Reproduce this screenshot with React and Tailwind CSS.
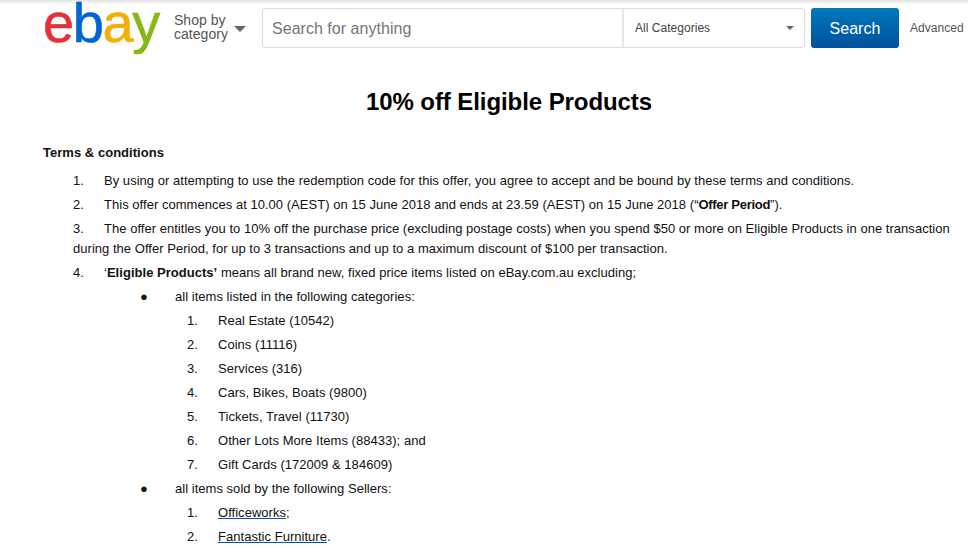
import React from 'react'

const categories = [
  'Real Estate (10542)',
  'Coins (11116)',
  'Services (316)',
  'Cars, Bikes, Boats (9800)',
  'Tickets, Travel (11730)',
  'Other Lots More Items (88433); and',
  'Gift Cards (172009 & 184609)',
]

const Caret = ({ className }) => <span className={`block border-x-transparent border-t-[#666] ${className}`} />

const Header = () => (
  <header className="flex h-[56px] items-start bg-gradient-to-b from-[#e4e4e4] to-white to-[5px] pl-[43px] pt-[8px]">
    <div className="-mt-[15px] flex h-[60px] w-[117px] items-center text-[56px] leading-none tracking-[-1.4px] font-['Liberation_Sans',sans-serif] [-webkit-text-stroke:0.6px]">
      <span className="text-[#e53238]">e</span>
      <span className="text-[#0064d2]">b</span>
      <span className="text-[#f5af02]">a</span>
      <span className="text-[#86b817]">y</span>
    </div>
    <div className="ml-[14px] mt-[5px] w-[58px] text-[14px] leading-[14px] text-[#555]">Shop by category</div>
    <Caret className="ml-[2px] mt-[18px] border-x-[6px] border-t-[6px]" />
    <div className="ml-[16px] flex h-[40px] w-[543px] rounded-[3px] border border-[#ddd]">
      <div className="flex w-[361px] items-center border-r-2 border-[#e5e5e5] pl-[9px] pt-[1px] text-[16px] text-[#757575]">Search for anything</div>
      <div className="flex flex-1 items-center justify-between pl-[11px] pr-[10px] text-[12px] text-[#444]">
        All Categories
        <Caret className="border-x-[4px] border-t-[4px]" />
      </div>
    </div>
    <button className="ml-[6px] h-[40px] w-[88px] rounded-[3px] bg-gradient-to-b from-[#0079bc] to-[#00509d] pt-[1px] text-[16px] text-white">Search</button>
    <span className="ml-[11px] mt-[11px] text-[12px] text-[#555]">Advanced</span>
  </header>
)

const Row = ({ marker, className = '', children }) => (
  <p className={`mb-[4px] leading-[20px] ${className}`}>
    <span className="inline-block w-[31px]">{marker}</span>
    {children}
  </p>
)

const App = () => (
  <div className="h-[550px] overflow-hidden bg-white font-['Liberation_Sans',Arial,sans-serif] text-[13px] tracking-[0.03px] text-[#111]">
    <Header />
    <h1 className="mt-[30px] pl-[50px] text-center text-[24px] font-bold leading-[32px] tracking-[-0.08px] text-black">10% off Eligible Products</h1>
    <div className="pl-[43px] pr-[10px] pt-[25px]">
      <h2 className="mb-[8px] font-bold leading-[20px]">Terms &amp; conditions</h2>
      <div className="pl-[30px]">
        <Row marker="1.">By using or attempting to use the redemption code for this offer, you agree to accept and be bound by these terms and conditions.</Row>
        <Row marker="2.">This offer commences at 10.00 (AEST) on 15 June 2018 and ends at 23.59 (AEST) on 15 June 2018 (“<b className="tracking-[-0.3px]">Offer Period</b>”).</Row>
        <Row marker="3.">The offer entitles you to 10% off the purchase price (excluding postage costs) when you spend $50 or more on Eligible Products in one transaction during the Offer Period, for up to 3 transactions and up to a maximum discount of $100 per transaction.</Row>
        <Row marker="4.">‘<b>Eligible Products’</b> means all brand new, fixed price items listed on eBay.com.au excluding;</Row>
        <div className="pl-[67px]">
          <Row marker="●" className="[&>span]:w-[35px]">all items listed in the following categories:</Row>
          <div className="pl-[47px]">
            {categories.map((name, i) => (
              <Row key={name} marker={`${i + 1}.`}>{name}</Row>
            ))}
          </div>
          <Row marker="●" className="[&>span]:w-[35px]">all items sold by the following Sellers:</Row>
          <div className="pl-[47px]">
            <Row marker="1."><a className="underline decoration-[#0654ba]">Officeworks</a>;</Row>
            <Row marker="2."><a className="underline decoration-[#0654ba]">Fantastic Furniture</a>.</Row>
          </div>
        </div>
      </div>
    </div>
  </div>
)

export default App
